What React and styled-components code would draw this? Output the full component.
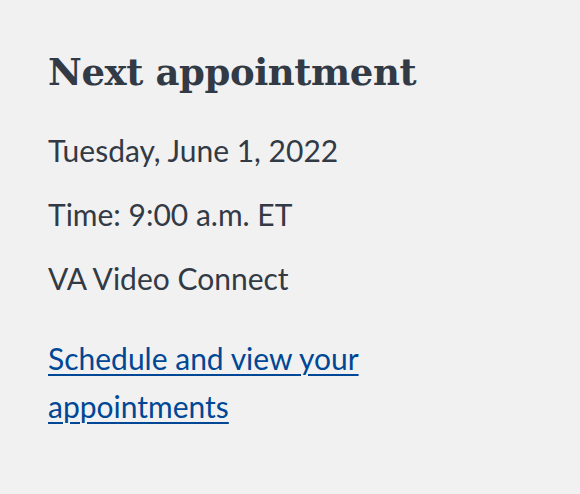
import React from 'react'
import styled, { createGlobalStyle } from 'styled-components'

const Global = createGlobalStyle`
    html, body {
        margin: 0;
        padding: 0;
        background: #f1f1f1;
    }
`

const Container = styled.section`
    padding: 44px 48px;
    color: #323a45;
    font-family: Lato, "Open Sans", sans-serif;
`

const Title = styled.h2`
    margin: 0 0 26px;
    font-family: "DejaVu Serif", serif;
    font-weight: 700;
    font-size: 37px;
    line-height: 56px;
    letter-spacing: -0.4px;
`

const Text = styled.p`
    margin: 0 0 16px;
    font-size: 30px;
    line-height: 48px;
`

const Link = styled.a`
    display: block;
    margin-top: 32px;
    max-width: 360px;
    color: #004795;
    font-size: 30px;
    line-height: 48px;
    text-decoration: underline;
    text-underline-offset: 4px;
    text-decoration-thickness: 2px;
`

const NextAppointment = () => {
  return (
    <Container>
        <Title>Next appointment</Title>
        <Text>Tuesday, June 1, 2022</Text>
        <Text>Time: 9:00 a.m. ET</Text>
        <Text>VA Video Connect</Text>
        <Link href="#">Schedule and view your appointments</Link>
    </Container>
  )
}

export default function App() {
  return (
    <>
        <Global />
        <NextAppointment />
    </>
  )
}
